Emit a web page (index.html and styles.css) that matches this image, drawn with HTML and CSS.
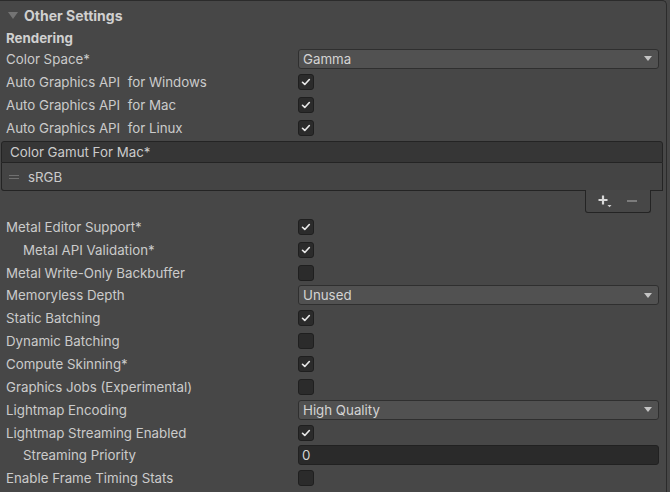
FILE: index.html
```html
<!DOCTYPE html>
<html>
<head>
<meta charset="utf-8">
<link rel="stylesheet" href="styles.css">
</head>
<body>
<div class="inspector">
  <div class="foldout"><span class="fold-arrow"></span><span>Other Settings</span></div>
  <div class="section">Rendering</div>
  <div class="group-a">
    <div class="row"><span class="label">Color Space*</span><div class="dropdown"><span>Gamma</span><span class="dd-arrow"></span></div></div>
    <div class="row"><span class="label">Auto Graphics API&nbsp; for Windows</span><span class="check on"><svg viewBox="0 0 16 16"><path d="M4 8.3 L6.6 10.8 L11.8 5.2"/></svg></span></div>
    <div class="row"><span class="label">Auto Graphics API&nbsp; for Mac</span><span class="check on"><svg viewBox="0 0 16 16"><path d="M4 8.3 L6.6 10.8 L11.8 5.2"/></svg></span></div>
    <div class="row"><span class="label">Auto Graphics API&nbsp; for Linux</span><span class="check on"><svg viewBox="0 0 16 16"><path d="M4 8.3 L6.6 10.8 L11.8 5.2"/></svg></span></div>
  </div>
  <div class="list">
    <div class="list-header">Color Gamut For Mac*</div>
    <div class="list-element"><span class="handle"></span><span>sRGB</span></div>
    <div class="list-footer-wrap">
      <div class="list-footer">
        <span class="plus"><svg viewBox="0 0 16 14"><path class="pl" d="M6 1.5 V10.5 M1.5 6 H10.5"/><path class="tri" d="M10.5 11 H14.5 L12.5 13.2 Z"/></svg></span>
        <span class="minus"></span>
      </div>
    </div>
  </div>
  <div class="group-b">
    <div class="row"><span class="label">Metal Editor Support*</span><span class="check on"><svg viewBox="0 0 16 16"><path d="M4 8.3 L6.6 10.8 L11.8 5.2"/></svg></span></div>
    <div class="row"><span class="label indent">Metal API Validation*</span><span class="check on"><svg viewBox="0 0 16 16"><path d="M4 8.3 L6.6 10.8 L11.8 5.2"/></svg></span></div>
    <div class="row"><span class="label">Metal Write-Only Backbuffer</span><span class="check"></span></div>
    <div class="row"><span class="label">Memoryless Depth</span><div class="dropdown"><span>Unused</span><span class="dd-arrow"></span></div></div>
    <div class="row"><span class="label">Static Batching</span><span class="check on"><svg viewBox="0 0 16 16"><path d="M4 8.3 L6.6 10.8 L11.8 5.2"/></svg></span></div>
    <div class="row"><span class="label">Dynamic Batching</span><span class="check"></span></div>
    <div class="row"><span class="label">Compute Skinning*</span><span class="check on"><svg viewBox="0 0 16 16"><path d="M4 8.3 L6.6 10.8 L11.8 5.2"/></svg></span></div>
    <div class="row"><span class="label">Graphics Jobs (Experimental)</span><span class="check"></span></div>
    <div class="row"><span class="label">Lightmap Encoding</span><div class="dropdown"><span>High Quality</span><span class="dd-arrow"></span></div></div>
    <div class="row"><span class="label">Lightmap Streaming Enabled</span><span class="check on"><svg viewBox="0 0 16 16"><path d="M4 8.3 L6.6 10.8 L11.8 5.2"/></svg></span></div>
    <div class="row"><span class="label indent">Streaming Priority</span><div class="textfield">0</div></div>
    <div class="row"><span class="label">Enable Frame Timing Stats</span><span class="check"></span></div>
  </div>
</div>
</body>
</html>
```

FILE: styles.css
```css
html, body {
  margin: 0;
  padding: 0;
  background: #474747;
}
body {
  width: 670px;
  height: 492px;
  overflow: hidden;
  font-family: Inter, "Noto Sans", sans-serif;
  font-size: 13.3px;
  color: #cbcbcb;
}
.inspector {
  width: 667px;
  height: 492px;
  border-top: 1px solid #2b2b2b;
  border-right: 1px solid #2b2b2b;
  border-top-right-radius: 5px;
  box-sizing: border-box;
}
.foldout {
  height: 27px;
  display: flex;
  align-items: center;
  padding-left: 8px;
  padding-top: 1px;
  box-sizing: border-box;
  font-weight: 700;
  font-size: 14px;
  color: #d0d0d0;
}
.fold-arrow {
  width: 0;
  height: 0;
  border-left: 5px solid transparent;
  border-right: 5px solid transparent;
  border-top: 7px solid #747474;
  margin-right: 6px;
  margin-top: 1px;
}
.section {
  height: 19px;
  display: flex;
  align-items: center;
  padding-left: 6px;
  font-weight: 700;
  color: #d0d0d0;
}
.row {
  height: 23px;
  display: grid;
  grid-template-columns: 298px 1fr;
  align-items: center;
  padding-right: 7px;
}
.group-b .row {
  height: 22.85px;
}
.group-b {
  margin-top: 2.5px;
}
.label {
  padding-left: 6px;
  white-space: nowrap;
}
.label.indent {
  padding-left: 23px;
}
.check {
  width: 16px;
  height: 16px;
  box-sizing: border-box;
  background: #2b2b2b;
  border: 1px solid #1f1f1f;
  border-radius: 3px;
  display: flex;
}
.check svg {
  width: 14px;
  height: 14px;
}
.check svg path {
  fill: none;
  stroke: #e8e8e8;
  stroke-width: 1.9;
  stroke-linecap: round;
  stroke-linejoin: round;
}
.dropdown {
  height: 20px;
  box-sizing: border-box;
  background: #515151;
  border: 1px solid #2f2f2f;
  border-radius: 3px;
  display: flex;
  align-items: center;
  justify-content: space-between;
  padding: 0 6px 0 4px;
  color: #d4d4d4;
}
.dd-arrow {
  width: 0;
  height: 0;
  border-left: 4px solid transparent;
  border-right: 4px solid transparent;
  border-top: 5px solid #c4c4c4;
}
.textfield {
  height: 20px;
  box-sizing: border-box;
  background: #2a2a2a;
  border: 1px solid #212121;
  border-radius: 3px;
  display: flex;
  align-items: center;
  padding-left: 3px;
  color: #d4d4d4;
}
.list {
  margin: 2px 3px 0 1px;
}
.list-header {
  height: 22px;
  box-sizing: border-box;
  background: #363636;
  border: 1px solid #242424;
  border-radius: 3px 3px 0 0;
  display: flex;
  align-items: center;
  padding-left: 8px;
}
.list-element {
  height: 28px;
  box-sizing: border-box;
  background: #444444;
  border: 1px solid #242424;
  border-top: none;
  border-radius: 0 0 0 3px;
  display: flex;
  align-items: center;
  padding-left: 7px;
}
.handle {
  width: 10px;
  height: 4px;
  box-sizing: border-box;
  border-top: 1px solid #707070;
  border-bottom: 1px solid #707070;
  margin-right: 9px;
  margin-top: 1px;
}
.list-footer-wrap {
  display: flex;
  justify-content: flex-end;
  padding-right: 12px;
}
.list-footer {
  width: 66px;
  height: 23px;
  margin-top: -1px;
  box-sizing: border-box;
  background: #474747;
  border: 1px solid #242424;
  border-top: none;
  border-radius: 0 0 3px 3px;
  display: flex;
  align-items: center;
  padding-left: 11px;
  gap: 14px;
}
.plus {
  width: 16px;
  height: 14px;
  display: flex;
}
.plus svg {
  width: 16px;
  height: 14px;
}
.plus .pl {
  stroke: #d8d8d8;
  stroke-width: 2.2;
  fill: none;
}
.plus .tri {
  fill: #d0d0d0;
}
.minus {
  width: 10px;
  height: 2px;
  background: #7c7c7c;
}
```
